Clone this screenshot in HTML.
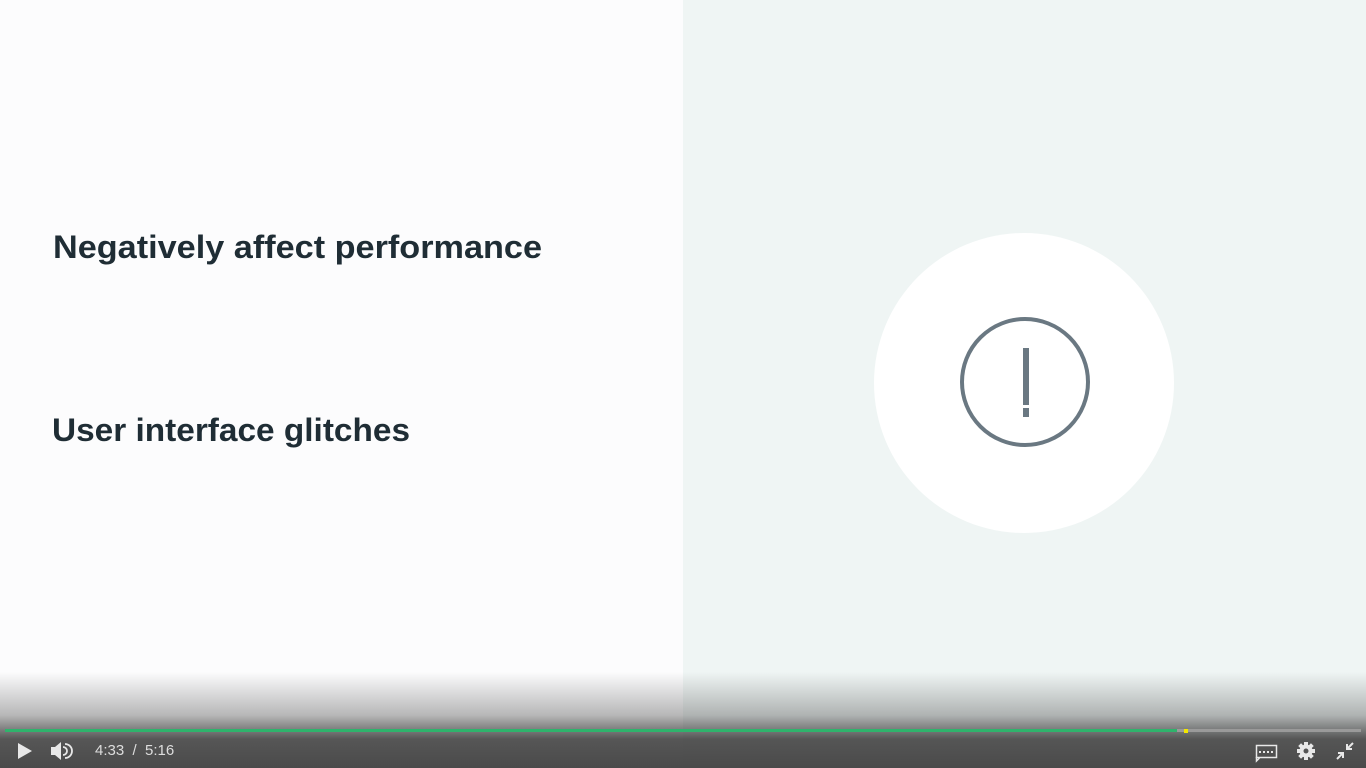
<!DOCTYPE html>
<html><head><meta charset="utf-8"><style>
html,body{margin:0;padding:0;width:1366px;height:768px;overflow:hidden;background:#fcfcfd;font-family:"Liberation Sans",sans-serif}
.right{position:absolute;left:683px;top:0;width:683px;height:768px;background:#eff5f4}
.circle{position:absolute;left:874px;top:233px;width:300px;height:300px;border-radius:50%;background:#fff}
.shade{position:absolute;left:0;top:672px;width:1366px;height:96px;background:linear-gradient(to bottom,rgba(80,80,80,0) 0%,rgba(80,80,80,0.4) 45%,rgba(72,72,72,0.92) 70%,#4a4a4a 100%)}
.time{position:absolute;left:95px;top:742px;color:#ddd;font-size:15px}
</style></head><body>
<div class="right"></div>
<div class="circle"></div>
<svg style="position:absolute;left:0;top:0" width="1366" height="768">
<text x="53" y="258" font-family="Liberation Sans, sans-serif" font-size="32" font-weight="bold" fill="#1f2d35" textLength="489" lengthAdjust="spacingAndGlyphs">Negatively affect performance</text>
<text x="52" y="441" font-family="Liberation Sans, sans-serif" font-size="32" font-weight="bold" fill="#1f2d35" textLength="358" lengthAdjust="spacingAndGlyphs">User interface glitches</text>
<circle cx="1025" cy="382" r="63" fill="none" stroke="#6a7882" stroke-width="4"/>
<rect x="1023" y="348" width="6" height="57" fill="#6a7882"/>
<rect x="1023" y="408" width="6" height="9" fill="#6a7882"/>
</svg>
<div class="shade"></div>
<svg style="position:absolute;left:0;top:0" width="1366" height="768">
<rect x="5" y="729" width="1172" height="3" fill="#2fb36c"/>
<rect x="1177" y="729" width="184" height="3" fill="#9a9a9a"/>
<rect x="1184" y="729" width="4" height="4" fill="#f2e600"/>
<path d="M18 743 L32 751 L18 759 Z" fill="#e8e8e8"/>
<path d="M51 747 h4 l6 -5 v18 l-6 -5 h-4 z" fill="#e8e8e8"/>
<path d="M63 747 a4 4 0 0 1 0 8 M65 744 a7 7 0 0 1 0 14" fill="none" stroke="#e8e8e8" stroke-width="1.8"/>
<rect x="1256.5" y="745.5" width="20" height="12" fill="none" stroke="#e8e8e8" stroke-width="1.5"/>
<path d="M1256.5 757 v4 l3 -3" fill="none" stroke="#e8e8e8" stroke-width="1.5"/>
<g fill="#e8e8e8"><rect x="1259" y="751" width="2" height="2"/><rect x="1263" y="751" width="2" height="2"/><rect x="1267" y="751" width="2" height="2"/><rect x="1271" y="751" width="2" height="2"/></g>
<g transform="translate(1306,751)"><circle r="6.5" fill="#e8e8e8"/><g fill="#e8e8e8"><rect x="-2" y="-9" width="4" height="18"/><rect x="-9" y="-2" width="18" height="4"/><rect x="-2" y="-9" width="4" height="18" transform="rotate(45)"/><rect x="-2" y="-9" width="4" height="18" transform="rotate(-45)"/></g><circle r="2.5" fill="#555"/></g>
<path d="M1353 743 l-6 6 M1347 744 v5 h5 M1337 759 l6 -6 M1338 753 h5 v5" fill="none" stroke="#e8e8e8" stroke-width="2"/>
</svg>
<div class="time">4:33 &nbsp;/ &nbsp;5:16</div>
</body></html>
